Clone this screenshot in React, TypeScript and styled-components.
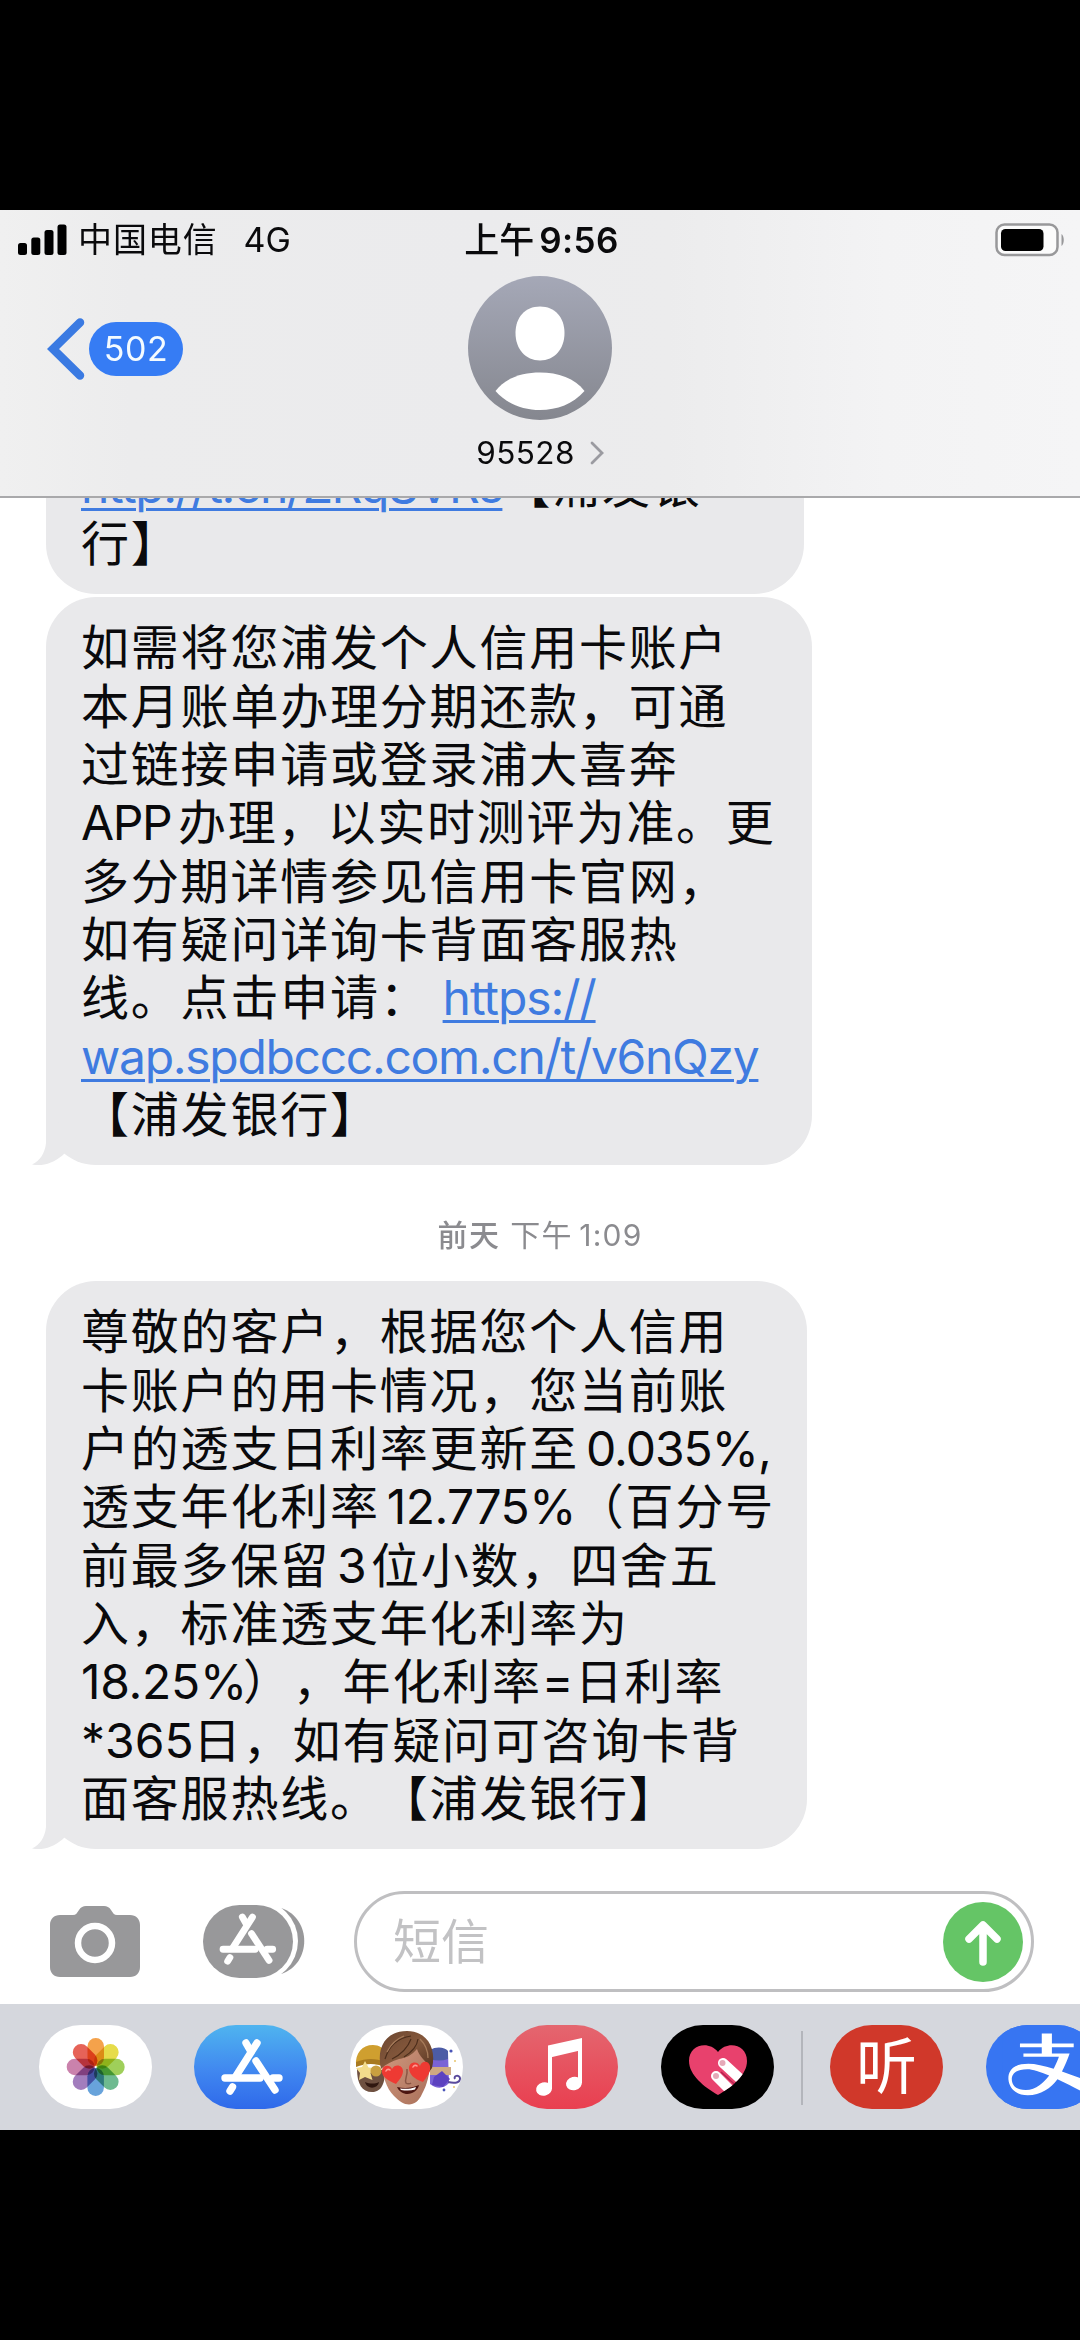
import React from "react";
import styled, { createGlobalStyle } from "styled-components";
import { FaAlipay } from "react-icons/fa";

const FONT = `Inter, "Noto Sans CJK SC", sans-serif`;

const GlobalStyle = createGlobalStyle`
  html, body { margin: 0; padding: 0; background: #000; }
  * { box-sizing: border-box; }
`;

const Page = styled.div`
  width: 1080px;
  height: 2340px;
  padding: 210px 0;
  background: #000;
  overflow: hidden;
  font-family: ${FONT};
  color: #0a0a0c;
`;

const Screen = styled.main`
  width: 1080px;
  height: 1920px;
  display: flex;
  flex-direction: column;
  background: #fff;
  overflow: hidden;
`;

/* ---------- header ---------- */

const Header = styled.header`
  flex: none;
  height: 288px;
  border-bottom: 2px solid #a9a9ab;
  background: linear-gradient(90deg, #f0f0f0 0, #ececed 12%, #ebebed 45%, #ececed 62%, #f3f3f4 82%, #f5f5f6 100%);
`;

const StatusBar = styled.div`
  height: 60px;
  padding: 0 15px 0 18px;
  display: grid;
  grid-template-columns: 1fr auto 1fr;
  align-items: center;
`;

const Carrier = styled.div`
  display: flex;
  align-items: center;
  font-size: 34px;
  line-height: 58px;
  white-space: pre;
`;

const SignalBars = styled.svg`
  width: 49px;
  height: 32px;
  margin-right: 11px;
`;

const CarrierName = styled.span`
  letter-spacing: 0.9px;
  margin-right: 26px;
`;

const Clock = styled.div`
  display: flex;
  font-size: 35px;
  line-height: 58px;
  font-weight: 600;
  gap: 5px;
`;

const Meridiem = styled.span`
  font-weight: 500;
`;

const Hours = styled.span`
  letter-spacing: 0.4px;
`;

const Battery = styled.svg`
  width: 70px;
  height: 34px;
  justify-self: end;
`;

const NavBar = styled.div`
  display: grid;
  grid-template-columns: 1fr 200px 1fr;
  height: 226px;
`;

const BackButton = styled.button`
  display: flex;
  align-items: center;
  align-self: start;
  gap: 4px;
  margin: 47px 0 0 47px;
  padding: 0;
  border: 0;
  background: none;
  font-family: inherit;
`;

const UnreadBadge = styled.span`
  width: 94px;
  height: 54px;
  border-radius: 27px;
  background: #367cf4;
  color: #f4fbff;
  font-size: 34px;
  line-height: 53px;
  letter-spacing: 0.5px;
  text-align: center;
`;

const Contact = styled.div`
  display: flex;
  flex-direction: column;
  align-items: center;
  padding-top: 6px;
`;

const ContactName = styled.div`
  display: flex;
  align-items: center;
  gap: 15px;
  margin-top: 11px;
  font-size: 31.5px;
  line-height: 44px;
  letter-spacing: 0.4px;
`;

/* ---------- conversation ---------- */

const Thread = styled.section`
  flex: 1;
  min-height: 0;
  display: flex;
  flex-direction: column;
  justify-content: flex-end;
  align-items: flex-start;
  padding: 0 0 35px 46px;
  overflow: hidden;
`;

const Bubble = styled.div<{ $width: number }>`
  position: relative;
  flex: none;
  width: ${(p) => p.$width}px;
  margin-top: 3px;
  padding: 22.5px 0 20.500px 35px;
  border-radius: 50px;
  background: #e9e9eb;
  font-size: 48px;
  line-height: 58.35px;
  letter-spacing: 1.8px;
  white-space: pre;
  text-spacing-trim: space-all;
`;

const Tail = styled.svg`
  position: absolute;
  left: -14px;
  bottom: 0;
  width: 70px;
  height: 50px;
`;

const Line = styled.div`
  height: 58.35px;
`;

const Latin = styled.span<{ $w: number; $ls?: number; $pad?: number }>`
  display: inline-block;
  width: ${(p) => p.$w}px;
  padding-left: ${(p) => p.$pad ?? 0}px;
  letter-spacing: ${(p) => p.$ls ?? 0}px;
`;

const Link = styled.a<{ $ls: number }>`
  color: #3f7be0;
  letter-spacing: ${(p) => p.$ls}px;
  text-decoration: underline;
  text-decoration-thickness: 3px;
  text-underline-offset: 5px;
`;

const TimeStamp = styled.time`
  align-self: stretch;
  display: flex;
  justify-content: center;
  gap: 10px;
  height: 113px;
  padding: 0 46px 0 0;
  font-size: 30px;
  line-height: 140px;
  color: #8b8b8f;
`;

const Day = styled.span`
  font-weight: 500;
  letter-spacing: 1.4px;
`;

const Hour = styled.span`
  letter-spacing: 1.2px;
  word-spacing: -3px;
`;

/* ---------- composer ---------- */

const Composer = styled.div`
  flex: none;
  height: 120px;
  padding: 0 46px 0 50px;
  display: flex;
  align-items: flex-start;
`;

const CameraIcon = styled.svg`
  width: 90px;
  height: 71px;
  margin: 22px 63px 0 0;
`;

const AppsIcon = styled.svg`
  width: 103px;
  height: 74px;
  margin: 20px 48px 0 0;
`;

const InputBox = styled.div`
  flex: 1;
  height: 101px;
  margin-top: 7px;
  border: 3px solid #bfbfc1;
  border-radius: 51px;
  display: flex;
  align-items: center;
  justify-content: space-between;
  padding: 0 8px 0 36px;
  font-size: 48px;
  line-height: 80px;
  color: #c2c2c4;
`;

const SendButton = styled.button`
  width: 80px;
  height: 80px;
  padding: 0;
  border: 0;
  border-radius: 50%;
  background: #65c566;
`;

/* ---------- app drawer ---------- */

const Drawer = styled.nav`
  flex: none;
  height: 126px;
  padding: 21px 0 0 38.500px;
  display: flex;
  background: #d5d7dd;
  overflow: hidden;
`;

const AppPill = styled.div<{ $bg: string; $mr?: number }>`
  flex: none;
  width: 113px;
  height: 84px;
  margin-right: ${(p) => p.$mr ?? 42.5}px;
  border-radius: 42px;
  background: ${(p) => p.$bg};
  overflow: hidden;
`;

const Divider = styled.div`
  flex: none;
  width: 2px;
  height: 74px;
  margin: 6px 27px 0 0;
  background: #b3b5bb;
`;

const ListenMark = styled.div`
  color: #fff;
  font-size: 61px;
  line-height: 84px;
  text-align: center;
`;

const AlipayMark = styled.div`
  width: 82px;
  height: 68px;
  margin: 7px 0 0 20px;
  background: #fff;
  display: flex;
  align-items: center;
  justify-content: center;

  svg {
    flex: none;
    width: 90px;
    height: 102px;
    color: #3775f2;
  }
`;

function StoreGlyph({ color }: { color: string }) {
  return (
    <g fill="none" stroke={color} strokeWidth="7.4" strokeLinecap="round">
      <path d="M63 18 42 51" />
      <path d="m52 18 4 7" />
      <path d="m62 36 19 29" />
      <path d="M31 53h35M79 53h6" />
      <path d="m38.500 62-2.500 4" />
    </g>
  );
}

function PhotosArt() {
  const petals = ["#f39a3b", "#e4d93a", "#97cb4c", "#61b487", "#5b9bd8", "#9a72b8", "#c677a5", "#e4564a"];
  return (
    <svg width="113" height="84" viewBox="0 0 113 84">
      {petals.map((c, i) => (
        <rect
          key={c}
          x="48.500"
          y="13"
          width="16.500"
          height="28"
          rx="8.200"
          fill={c}
          opacity="0.92"
          transform={`rotate(${i * 45} 56.7 42)`}
          style={{ mixBlendMode: "multiply" }}
        />
      ))}
    </svg>
  );
}

function MemojiArt() {
  return (
    <svg width="113" height="84" viewBox="0 0 113 84">
      <defs>
        <linearGradient id="skin" x1="0" y1="0" x2="1" y2="1">
          <stop offset="0" stopColor="#d39a80" />
          <stop offset="1" stopColor="#a9705a" />
        </linearGradient>
        <linearGradient id="hair" x1="0" y1="0" x2="1" y2="1">
          <stop offset="0" stopColor="#6b4630" />
          <stop offset="0.5" stopColor="#84583c" />
          <stop offset="1" stopColor="#54321f" />
        </linearGradient>
      </defs>
      <path d="M7 44c0 15 5 23 15 23 8 0 13-6 13-22z" fill="#6e5040" />
      <path d="M6 41c-1-13 6-21 17-21 6 0 11 3 13 8v14c-9-4-20-4-30-1z" fill="#cf9f2f" />
      <path d="M6 37c10-4 20-4 29 0v5c-9-4-19-4-29 0z" fill="#a87a20" />
      <path d="m15 36 3.500 6.500 7 .5-5 5 2 7-7.500-3-6 3 1-7-4-5 6-1z" fill="#f3dc8c" />
      <circle cx="26" cy="46" r="5.500" fill="#c9a040" />
      <path d="M15 57c5 2 10 2 14 0-1 7-12 8-14 0z" fill="#301710" />
      <path d="M80 27c5-5 15-4 18 1l1 30c-5 6-13 6-19 1z" fill="#7a63d6" />
      <path d="M80 25c6-4 15-3 18 1v8c-6 2-12 2-18 0z" fill="#4c5ca6" />
      <path d="M80 42h21v8H80z" fill="#cfa982" />
      <path d="m84 52 8-6 8 8-7 8-11-2z" fill="#5c42c0" />
      <path d="M98 57c8 2 13 0 12-4s-7-2-5 1" fill="none" stroke="#5a4a9c" strokeWidth="2" />
      <circle cx="101" cy="26" r="1.600" fill="#4a55b8" />
      <circle cx="94" cy="65" r="1.400" fill="#4a55b8" />
      <circle cx="105" cy="36" r="1" fill="#e9c46a" />
      <circle cx="104" cy="62" r="1" fill="#e9c46a" />
      <path d="M32 36c0 14 4 27 12 35 5 5 10 8.500 15 8.500S69 76 72 69c5-9 8-20 8-33 0-10-10-18-24-18S32 26 32 36z" fill="url(#skin)" />
      <path d="M31 44C26 22 36 6 57 6c19 0 30 16 25 37l-3 4c0-6-3-10-6-13-3-3-5-7-6-10-5 6-11 9-18 10-7 2-13 5-18 10z" fill="url(#hair)" />
      <path d="M35 34c4-13 13-21 26-23M42 34c10-5 16-12 19-20M54 32c8-5 13-10 14-18" fill="none" stroke="#4b2d1b" strokeWidth="1.200" />
      <path d="M37 27c4-8 9-13 17-16M70 14c5 5 8 11 8 19" fill="none" stroke="#a67b5a" strokeWidth="1.300" />
      <path d="M46 59C37 55 31 51 32 45c1-5 8-6 10-1 3-6 11-4 11 2 0 5-4 9-7 13z" fill="#ee3a33" />
      <path d="M73 57c-9-3-14-8-14-14 0-6 8-8 11-2 2-6 9-5 10 0 1 6-3 11-7 16z" fill="#ee3a33" />
      <path d="M36 46c1-2 3-2 4-1M63 42c1-2 3-2 4-1" fill="none" stroke="#ff9a92" strokeWidth="1.600" strokeLinecap="round" />
      <path d="M57 44c1 7-3 11-1 14 1 1 4 1 5 0" fill="none" stroke="#8a5644" strokeWidth="1.500" />
      <path d="M47 62c8 2 15 1 22-2-2 10-17 13-22 2z" fill="#4c1510" />
      <path d="M50 63.500c6 .8 11 .3 16-1.500l-1 2.500c-4 1.300-9 1.300-14 .5z" fill="#fff" />
    </svg>
  );
}

function MusicArt() {
  return (
    <svg width="113" height="84" viewBox="0 0 113 84">
      <path d="M43 20.500 77 13v12L43 33z" fill="#fff" />
      <path d="M45 24v40M75 18v40" stroke="#fff" strokeWidth="4" />
      <ellipse cx="39" cy="64" rx="8" ry="6.600" transform="rotate(-14 39 64)" fill="#fff" />
      <ellipse cx="69" cy="58.500" rx="8" ry="6.600" transform="rotate(-14 69 58.5)" fill="#fff" />
    </svg>
  );
}

function TouchArt() {
  const heart = "M57 70C43 62 28 50 28 36c0-16 19-21 29-9 10-12 29-7 29 9 0 14-15 26-29 34z";
  return (
    <svg width="113" height="84" viewBox="0 0 113 84">
      <clipPath id="heart-clip">
        <path d={heart} />
      </clipPath>
      <path d={heart} fill="#e8416d" />
      <g clipPath="url(#heart-clip)">
        <g stroke="#fff" strokeWidth="10" strokeLinecap="round">
          <path d="m62 38 26 24" />
          <path d="m55 51 22 22" />
        </g>
        <path d="m60 47 22 20" stroke="#b32450" strokeWidth="1.500" />
        <circle cx="61.500" cy="38" r="3" fill="#e5a9b8" />
        <circle cx="55" cy="51" r="3" fill="#e5a9b8" />
      </g>
    </svg>
  );
}

function BubbleTail() {
  return (
    <Tail viewBox="0 0 70 50">
      <path d="M14 0v28C13 38 8 46 0 49.500 12 52 24 47 33 38L45 20z" fill="#e9e9eb" />
    </Tail>
  );
}

export default function App() {
  return (
    <Page>
      <GlobalStyle />
      <Screen>
        <Header>
          <StatusBar>
            <Carrier>
              <SignalBars viewBox="0 0 49 32">
                <rect x="0" y="19" width="9" height="12" rx="2.500" />
                <rect x="13.300" y="13.500" width="9" height="17.500" rx="2.500" />
                <rect x="26.500" y="6" width="9" height="25" rx="2.500" />
                <rect x="39.500" y="0.500" width="9" height="30.500" rx="2.500" />
              </SignalBars>
              <CarrierName>中国电信</CarrierName>
              <span>4G</span>
            </Carrier>
            <Clock>
              <Meridiem>上午</Meridiem>
              <Hours>9:56</Hours>
            </Clock>
            <Battery viewBox="0 0 70 34">
              <rect x="1.500" y="1.500" width="61" height="30.500" rx="8" fill="#fbfbfb" stroke="#98989a" strokeWidth="2.500" />
              <rect x="6" y="6" width="42.500" height="22" rx="4.500" />
              <path d="M66.500 11c3 2 3 10 0 12z" fill="#98989a" />
            </Battery>
          </StatusBar>
          <NavBar>
            <BackButton>
              <svg width="38" height="64" viewBox="0 0 38 64">
                <path d="M33 5.500 6 32l27 26.500" fill="none" stroke="#3a7ae2" strokeWidth="8.500" strokeLinecap="round" strokeLinejoin="miter" />
              </svg>
              <UnreadBadge>502</UnreadBadge>
            </BackButton>
            <Contact>
              <svg width="144" height="144" viewBox="0 0 144 144">
                <defs>
                  <linearGradient id="avatar" x1="0" y1="0" x2="0" y2="1">
                    <stop offset="0" stopColor="#a5a8b7" />
                    <stop offset="1" stopColor="#85878f" />
                  </linearGradient>
                </defs>
                <circle cx="72" cy="72" r="72" fill="url(#avatar)" />
                <path d="M72 30.500c15 0 24.500 11 24.500 26.500 0 16-10 27.500-24.500 27.500S47.500 73 47.500 57c0-15.500 9.500-26.500 24.500-26.500z" fill="#fff" />
                <path d="M27.500 115C37 102 54 96.500 72 96.500s35 5.500 44.500 18.500C105 128 89 134 72 134s-33-6-44.500-19z" fill="#fff" />
              </svg>
              <ContactName>
                <span>95528</span>
                <svg width="14" height="24" viewBox="0 0 14 24">
                  <path d="m2 2 10 10L2 22" fill="none" stroke="#9b9ba1" strokeWidth="2.800" strokeLinecap="round" />
                </svg>
              </ContactName>
            </Contact>
          </NavBar>
        </Header>

        <Thread>
          <Bubble $width={758}>
            <Line><Link $ls={-1.45}>http://t.cn/ZRqSVRs</Link>【浦发银</Line>
            <Line>行】</Line>
          </Bubble>
          <Bubble $width={766}>
            <Line>如需将您浦发个人信用卡账户</Line>
            <Line>本月账单办理分期还款，可通</Line>
            <Line>过链接申请或登录浦大喜奔</Line>
            <Line><Latin $w={97} $ls={-1.4}>APP</Latin>办理，以实时测评为准。更</Line>
            <Line>多分期详情参见信用卡官网，</Line>
            <Line>如有疑问详询卡背面客服热</Line>
            <Line>线。点击申请：<Latin $w={13}> </Latin><Link $ls={-1.1}>https://</Link></Line>
            <Line><Link $ls={-1.3}>wap.spdbccc.com.cn/t/v6nQzy</Link></Line>
            <Line>【浦发银行】</Line>
            <BubbleTail />
          </Bubble>
          <TimeStamp>
            <Day>前天</Day>
            <Hour>下午 1:09</Hour>
          </TimeStamp>
          <Bubble $width={761}>
            <Line>尊敬的客户，根据您个人信用</Line>
            <Line>卡账户的用卡情况，您当前账</Line>
            <Line>户的透支日利率更新至<Latin $w={190} $pad={7} $ls={-1}>0.035%,</Latin></Line>
            <Line>透支年化利率<Latin $w={196} $pad={7} $ls={-0.6}>12.775%</Latin>（百分号</Line>
            <Line>前最多保留<Latin $w={41} $pad={7}>3</Latin>位小数，四舍五</Line>
            <Line>入，标准透支年化利率为</Line>
            <Line><Latin $w={162} $ls={-0.3}>18.25%</Latin>），年化利率<Latin $w={33}>=</Latin>日利率</Line>
            <Line><Latin $w={112}>*365</Latin>日，如有疑问可咨询卡背</Line>
            <Line>面客服热线。【浦发银行】</Line>
            <BubbleTail />
          </Bubble>
        </Thread>

        <Composer>
          <CameraIcon viewBox="0 0 90 71">
            <path d="M10 9h13c3 0 4-2 6-5s4-4 7-4h18c3 0 5 1 7 4s3 5 6 5h13c6 0 10 4 10 10v42c0 6-4 10-10 10H10C4 71 0 67 0 61V19C0 13 4 9 10 9z" fill="#98989a" />
            <circle cx="45" cy="37" r="17" fill="none" stroke="#fff" strokeWidth="6.500" />
          </CameraIcon>
          <AppsIcon viewBox="0 0 103 74">
            <path d="M78 4c31 10 31 56 0 66z" fill="#98989a" />
            <rect x="-5" y="-4" width="100" height="82" rx="41" fill="#fff" />
            <rect x="0" y="1" width="90" height="73" rx="36.500" fill="#98989a" />
            <g transform="translate(-8.5 -3.5) scale(0.92)">
              <StoreGlyph color="#fff" />
            </g>
          </AppsIcon>
          <InputBox>
            <span>短信</span>
            <SendButton>
              <svg width="80" height="80" viewBox="0 0 80 80">
                <path d="M40 60V24M26 37l14-14 14 14" fill="none" stroke="#fff" strokeWidth="7.500" strokeLinecap="round" strokeLinejoin="round" />
              </svg>
            </SendButton>
          </InputBox>
        </Composer>

        <Drawer>
          <AppPill $bg="#fff"><PhotosArt /></AppPill>
          <AppPill $bg="linear-gradient(180deg, #4fb4ef, #4087f0 55%, #2f69ea)">
            <svg width="113" height="84" viewBox="0 0 113 84"><StoreGlyph color="#fff" /></svg>
          </AppPill>
          <AppPill $bg="#fff"><MemojiArt /></AppPill>
          <AppPill $bg="linear-gradient(180deg, #e4666f, #e93f50)"><MusicArt /></AppPill>
          <AppPill $bg="#000" $mr={27.5}><TouchArt /></AppPill>
          <Divider />
          <AppPill $bg="#d0382a"><ListenMark>听</ListenMark></AppPill>
          <AppPill $bg="#3775f2" $mr={0}>
            <AlipayMark><FaAlipay /></AlipayMark>
          </AppPill>
        </Drawer>
      </Screen>
    </Page>
  );
}
